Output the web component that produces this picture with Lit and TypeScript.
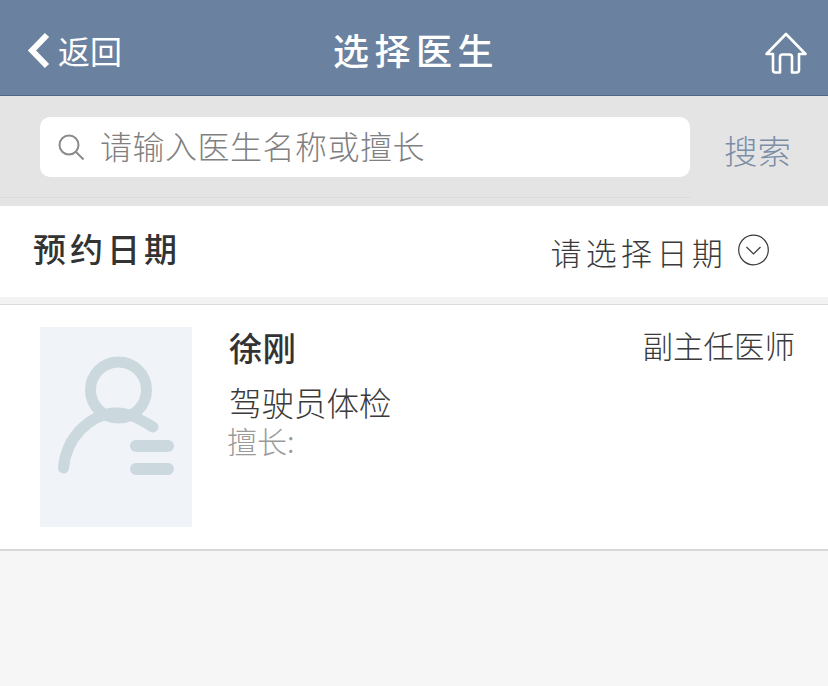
import { LitElement, html, css } from "lit";
import { customElement } from "lit/decorators.js";

@customElement("app-root")
export class AppRoot extends LitElement {
  static styles = css`
    :host {
      display: block;
      width: 828px;
      height: 686px;
      background: #f6f6f6;
      overflow: hidden;
      font-family: "Noto Sans CJK SC", "Liberation Sans", sans-serif;
      color: #333;
    }
    .header {
      height: 95px;
      background: #6a82a0;
      border-bottom: 1px solid #4d6686;
      display: grid;
      grid-template-columns: 1fr auto 1fr;
      align-items: center;
      color: #fff;
    }
    .back {
      display: flex;
      align-items: center;
      padding-left: 26px;
      gap: 7px;
      font-size: 32px;
      line-height: 40px;
    }
    .back span { padding-top: 4px; }
    .back svg { display: block; margin-top: 6px; }
    .title {
      font-size: 36px;
      letter-spacing: 5.5px;
      font-weight: 500;
      line-height: 44px;
      margin-right: -4px;
      padding-top: 2px;
    }
    .home {
      display: flex;
      justify-content: flex-end;
      padding: 10px 20px 0 0;
    }
    .search {
      height: 110px;
      background: #e4e4e5;
      box-sizing: border-box;
      padding: 21px 37px 0 40px;
      display: flex;
      align-items: flex-start;
      justify-content: space-between;
      position: relative;
    }
    .search::after {
      content: "";
      position: absolute;
      left: 0;
      width: 690px;
      top: 101px;
      height: 1px;
      background: #d9dadb;
    }
    .input {
      width: 650px;
      height: 60px;
      background: #fff;
      border-radius: 10px;
      display: flex;
      align-items: center;
      padding-left: 18px;
      box-sizing: border-box;
      gap: 15px;
      color: #808080;
      font-size: 32px;
      letter-spacing: 0.5px;
      font-weight: 300;
    }
    .input span { margin-top: -4px; }
    .go {
      font-size: 33.500px;
      line-height: 66px;
      color: #7b8ea6;
      font-weight: 300;
    }
    .date {
      height: 91px;
      background: #fff;
      display: flex;
      align-items: center;
      justify-content: space-between;
      padding: 0 59px 0 33px;
    }
    .date-label {
      font-size: 33px;
      letter-spacing: 4px;
      font-weight: 500;
      color: #333;
      padding-bottom: 7px;
    }
    .date-pick {
      display: flex;
      align-items: center;
      gap: 10px;
      font-size: 31px;
      letter-spacing: 4.300px;
      font-weight: 300;
      color: #3a3a3a;
    }
    .date-pick svg { margin-top: -3px; }
    .gap {
      height: 7px;
      background: #f3f3f3;
      border-bottom: 1px solid #dcdcdc;
    }
    .doctor {
      background: #fff;
      border-bottom: 2px solid #d8d8d8;
      padding: 22px 33px 0 40px;
      height: 222px;
      display: flex;
      gap: 37px;
    }
    .avatar {
      width: 152px;
      height: 200px;
      background: #f0f4f8;
      flex: none;
    }
    .info { flex: 1; min-width: 0; }
    .row1 {
      display: flex;
      justify-content: space-between;
      align-items: flex-start;
    }
    .name {
      font-size: 33.500px;
      font-weight: 500;
      line-height: 40px;
      color: #333;
    }
    .rank {
      font-size: 30.500px;
      line-height: 36px;
      font-weight: 300;
      color: #3a3a3a;
    }
    .dept {
      font-size: 32.500px;
      line-height: 36px;
      font-weight: 300;
      margin-top: 17px;
      color: #3a3a3a;
    }
    .skill {
      font-size: 30px;
      line-height: 34px;
      font-weight: 300;
      color: #9a9a9a;
      margin-left: -2px;
      margin-top: 3px;
    }
  `;

  render() {
    return html`
      <div class="header">
        <div class="back">
          <svg width="25" height="37" viewBox="0 0 25 37" fill="none">
            <path d="M21 3 L6 18.5 L21 34" stroke="#fff" stroke-width="6" />
          </svg>
          <span>返回</span>
        </div>
        <div class="title">选择医生</div>
        <div class="home">
          <svg width="44" height="42" viewBox="0 0 44 42" fill="none" stroke="#fff" stroke-width="2.6" stroke-linejoin="round" stroke-linecap="round">
            <path d="M9 22 H2.5 L22 2 L41.500 22 H35 V38 Q35 40.500 32.500 40.500 H28 V25 Q28 22.500 25.500 22.500 H18.500 Q16 22.500 16 25 V40.500 H11.500 Q9 40.500 9 38 Z" />
          </svg>
        </div>
      </div>
      <div class="search">
        <div class="input">
          <svg width="27" height="27" viewBox="0 0 27 27" fill="none" stroke="#8a8a8a" stroke-width="2">
            <circle cx="11" cy="11" r="9.500" />
            <path d="M18 18 L25.500 25.500" />
          </svg>
          <span>请输入医生名称或擅长</span>
        </div>
        <div class="go">搜索</div>
      </div>
      <div class="date">
        <div class="date-label">预约日期</div>
        <div class="date-pick">
          <span>请选择日期</span>
          <svg width="32" height="32" viewBox="0 0 32 32" fill="none" stroke="#3a3a3a" stroke-width="1.200">
            <circle cx="16.500" cy="16" r="14.800" />
            <path d="M9.500 13 L16.500 20 L23.500 13" />
          </svg>
        </div>
      </div>
      <div class="gap"></div>
      <div class="doctor">
        <div class="avatar">
          <svg width="152" height="200" viewBox="0 0 152 200" fill="none" stroke="#cbd8de" stroke-linecap="round">
            <circle cx="78.500" cy="63" r="28" stroke-width="11" />
            <path d="M23.500 141 C26 110 50 88 74 86 C88 85 98 91 113 100" stroke-width="11" />
            <path d="M96 119 H128 M96 142 H128" stroke-width="12" />
          </svg>
        </div>
        <div class="info">
          <div class="row1">
            <div class="name">徐刚</div>
            <div class="rank">副主任医师</div>
          </div>
          <div class="dept">驾驶员体检</div>
          <div class="skill">擅长:</div>
        </div>
      </div>
    `;
  }
}
